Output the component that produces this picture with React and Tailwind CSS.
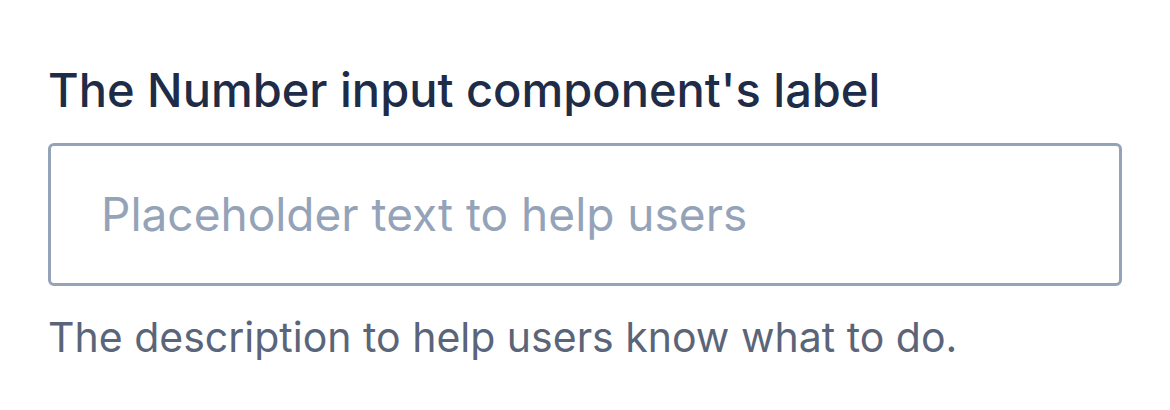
export default function App() {
  return (
    <div className="min-h-screen bg-white px-[48px] pt-[63px]" style={{ fontFamily: 'Inter, "Noto Sans", sans-serif' }}>
      <label className="block text-[47px] leading-[54px] font-medium text-[#1f2c47]">
        The Number input component's label
      </label>
      <div className="mt-[26px] h-[143px] w-[1074px] rounded-[6px] border-[3px] border-[#94a3b8] flex items-center pl-[50px]">
        <input
          type="number"
          placeholder="Placeholder text to help users"
          className="w-full bg-transparent text-[46px] outline-none placeholder:text-[#94a3b8] text-[#1e293b]"
        />
      </div>
      <p className="mt-[26px] text-[41px] leading-[50px] text-[#5b6579]">
        The description to help users know what to do.
      </p>
    </div>
  );
}
